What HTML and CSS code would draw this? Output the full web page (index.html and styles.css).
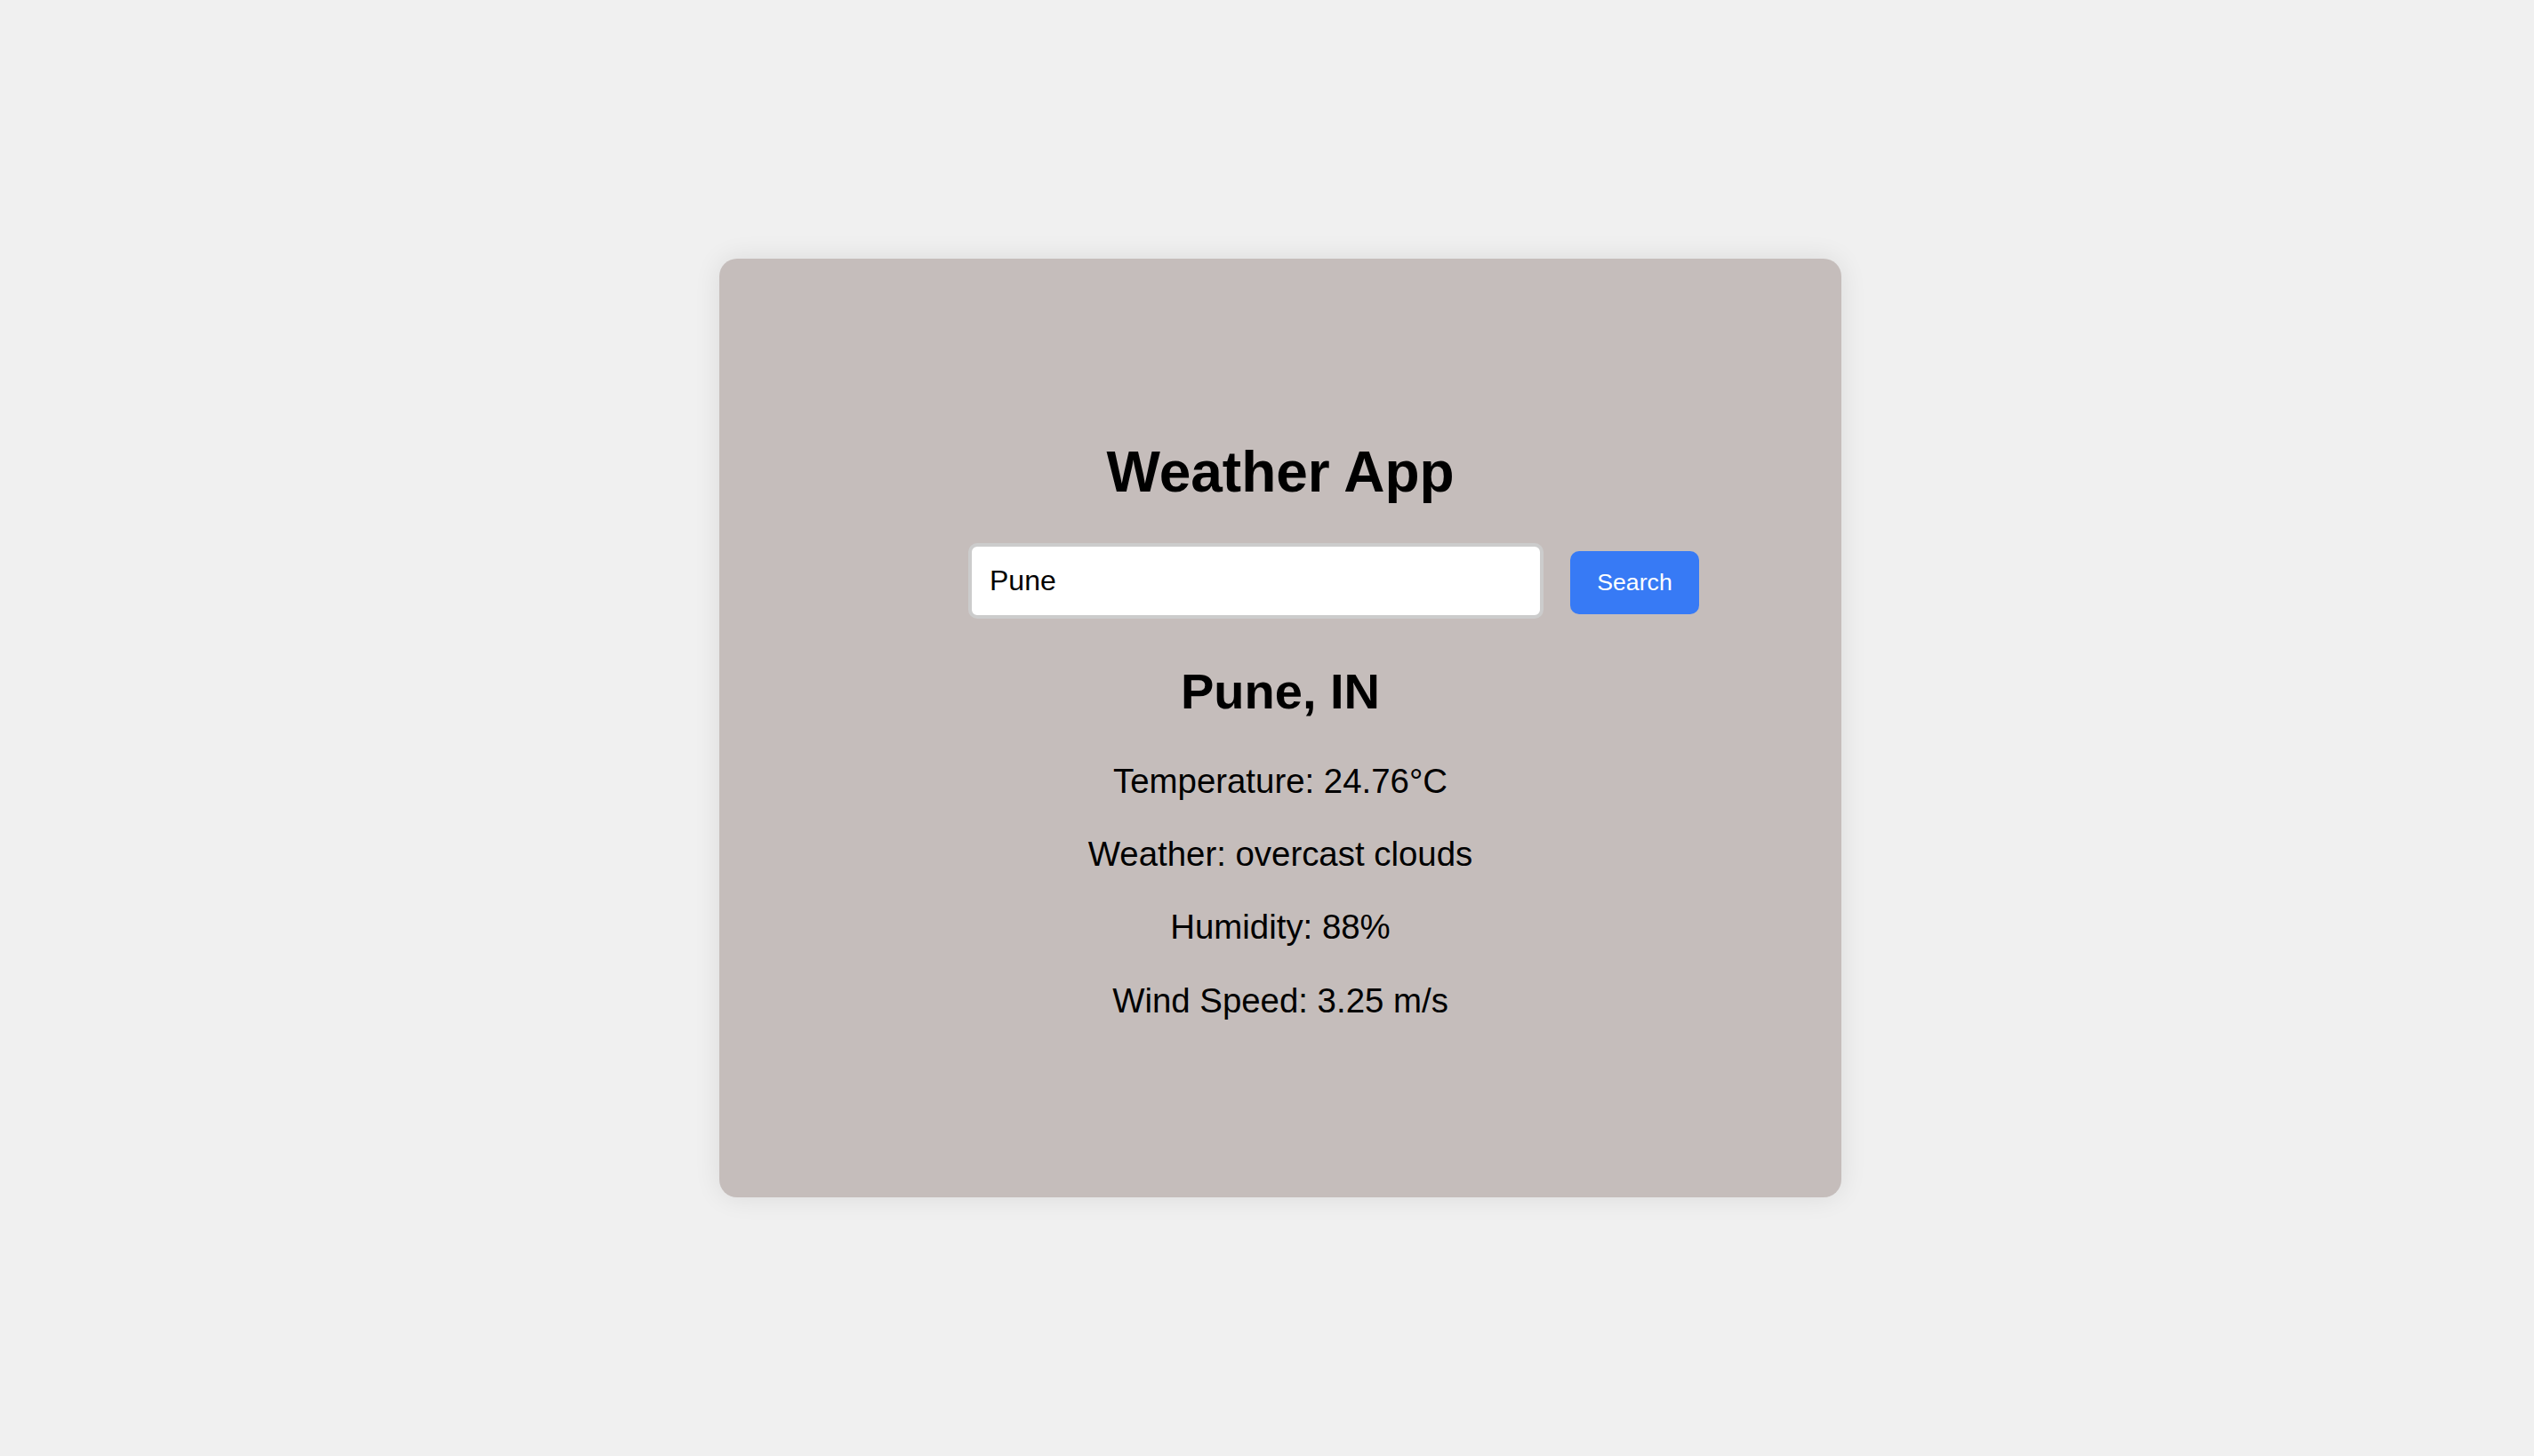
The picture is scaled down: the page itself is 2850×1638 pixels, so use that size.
FILE: index.html
```html
<!DOCTYPE html>
<html lang="en">
<head>
<meta charset="utf-8">
<title>Weather App</title>
<link rel="stylesheet" href="styles.css">
</head>
<body>
<main class="card">
  <h1 class="title">Weather App</h1>
  <div class="search-row">
    <input class="city-input" type="text" value="Pune">
    <button class="search-btn" type="button">Search</button>
  </div>
  <h2 class="city">Pune, IN</h2>
  <p class="info">Temperature: 24.76°C</p>
  <p class="info">Weather: overcast clouds</p>
  <p class="info">Humidity: 88%</p>
  <p class="info">Wind Speed: 3.25 m/s</p>
</main>
</body>
</html>
```

FILE: styles.css
```css
html, body {
  margin: 0;
  padding: 0;
}
body {
  background: #f0f0f0;
  font-family: "Liberation Sans", Arial, sans-serif;
  color: #000;
  height: 1638px;
  display: flex;
  align-items: center;
  justify-content: center;
  padding-left: 30px;
  box-sizing: border-box;
}
.card {
  width: 1262px;
  height: 1056px;
  box-sizing: border-box;
  background: #c5bdbb;
  border-radius: 20px;
  box-shadow: 0 0 30px rgba(0, 0, 0, 0.09);
  padding-top: 160px;
  text-align: center;
}
.title {
  font-size: 64px;
  font-weight: bold;
  line-height: normal;
  margin: 43px 0 43px;
}
.search-row {
  display: flex;
  align-items: baseline;
  justify-content: center;
  gap: 30px;
  padding-left: 120px;
}
.city-input {
  width: 647px;
  height: 85px;
  box-sizing: border-box;
  padding: 20px;
  border: 4px solid #cccccc;
  border-radius: 10px;
  font-family: "Liberation Sans", Arial, sans-serif;
  font-size: 32px;
  color: #000;
  background: #fff;
  outline: none;
}
.search-btn {
  width: 145px;
  height: 71px;
  box-sizing: border-box;
  padding: 20px 30px;
  border: none;
  border-radius: 10px;
  background: #377af5;
  color: #fff;
  font-family: "Liberation Sans", Arial, sans-serif;
  font-size: 26.67px;
  line-height: normal;
}
.city {
  font-size: 56px;
  font-weight: bold;
  line-height: normal;
  margin: 49px 0 46.5px;
}
.info {
  font-size: 38.4px;
  line-height: normal;
  margin: 38.4px 0;
}
```
